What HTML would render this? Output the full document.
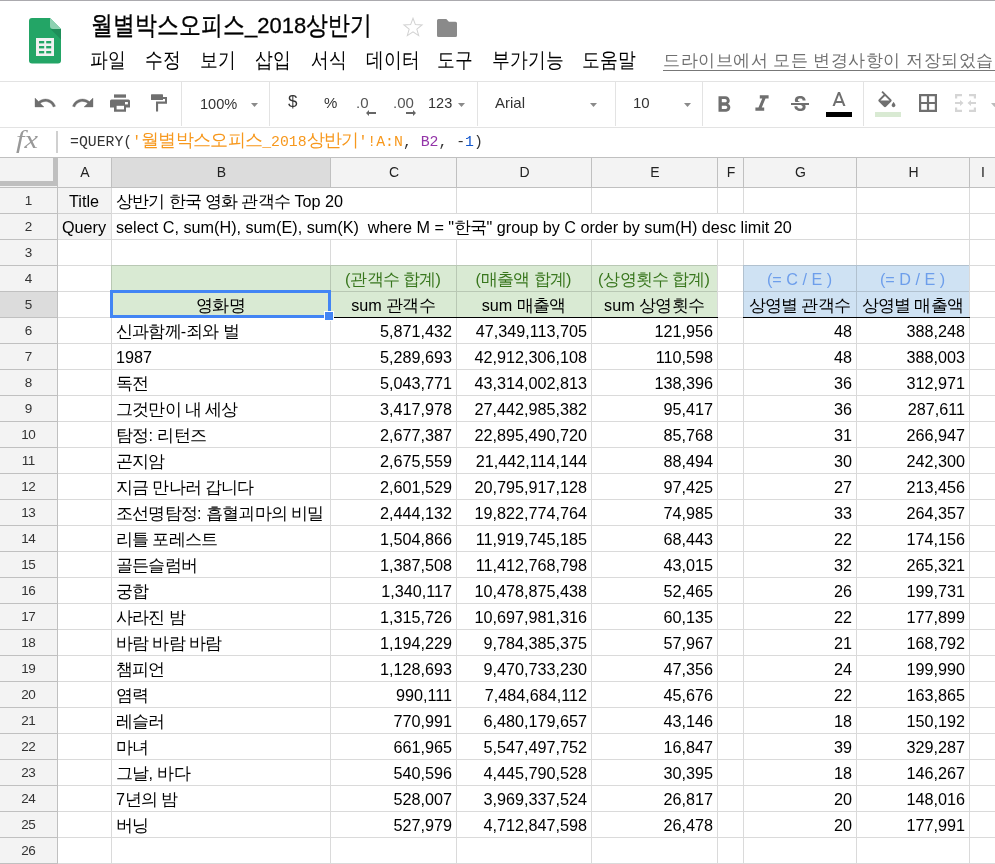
<!DOCTYPE html>
<html><head><meta charset="utf-8"><style>
*{box-sizing:border-box}
html,body{margin:0;padding:0;width:995px;height:864px;overflow:hidden;background:#fff;position:relative;font-family:"Liberation Sans",sans-serif}
.a{position:absolute}
.hl{position:absolute;height:1px}
.vl{position:absolute;width:1px}
.t{position:absolute;white-space:nowrap;font-size:16.2px;line-height:26px;height:26px;color:#000}
.r{text-align:right}
.k{font-size:17.3px;letter-spacing:-0.8px;position:relative;top:-0.5px}
.kf{font-size:18px;letter-spacing:-0.7px}
.c{text-align:center}
.mi{position:absolute;top:47px;font-size:17.5px;line-height:26px;color:#000;white-space:nowrap;transform:scaleY(1.18)}
.ky{display:inline-block;transform:scaleY(1.19)}
svg{position:absolute;overflow:visible}
</style></head><body>

<div class="hl" style="left:0;top:0;width:995px;background:#abaaae"></div>
<svg style="left:29px;top:18px" width="32" height="46" viewBox="0 0 32 46">
<path d="M3 0H21L32 11V42.5A3 3 0 0 1 29 45.5H3A3 3 0 0 1 0 42.5V3A3 3 0 0 1 3 0Z" fill="#23a566"/>
<path d="M21 0L32 11H24A3 3 0 0 1 21 8Z" fill="#8ed1b1"/>
<path d="M21.5 11L32 21.5V11Z" fill="#1e8e59"/>
<rect x="7" y="20" width="18" height="18" fill="#f1f1f1"/>
<rect x="10" y="23" width="5.2" height="2.4" fill="#23a566"/><rect x="17.2" y="23" width="5" height="2.4" fill="#23a566"/>
<rect x="10" y="28" width="5.2" height="2.4" fill="#23a566"/><rect x="17.2" y="28" width="5" height="2.4" fill="#23a566"/>
<rect x="10" y="33" width="5.2" height="2.4" fill="#23a566"/><rect x="17.2" y="33" width="5" height="2.4" fill="#23a566"/>
</svg>
<div class="a" style="left:91px;top:11px;font-size:22px;line-height:30px;color:#000;white-space:nowrap;-webkit-text-stroke:0.3px #000"><span class="ky">월별박스오피스</span>_2018<span class="ky">상반기</span></div>
<svg style="left:402px;top:16px" width="22" height="22" viewBox="0 0 24 24"><path d="M12 2.5l2.6 6.9 7.3.3-5.7 4.6 2 7.1L12 17.3l-6.2 4.1 2-7.1-5.7-4.6 7.3-.3z" fill="none" stroke="#d2d2d2" stroke-width="1.1"/></svg>
<svg style="left:437px;top:19px" width="20" height="18" viewBox="0 0 20 18"><path d="M0 1.5A1.5 1.5 0 0 1 1.5 0H9.3L11.9 2.7H18.5A1.5 1.5 0 0 1 20 4.2V16.5A1.5 1.5 0 0 1 18.5 18H1.5A1.5 1.5 0 0 1 0 16.5Z" fill="#8a8a8a"/></svg>
<div class="mi" style="left:90px">파일</div>
<div class="mi" style="left:145px">수정</div>
<div class="mi" style="left:200px">보기</div>
<div class="mi" style="left:255px">삽입</div>
<div class="mi" style="left:311px">서식</div>
<div class="mi" style="left:366px">데이터</div>
<div class="mi" style="left:437px">도구</div>
<div class="mi" style="left:492px">부가기능</div>
<div class="mi" style="left:582px">도움말</div>
<div class="a" style="left:663px;top:48px;font-size:17px;letter-spacing:0.5px;line-height:26px;color:#707070;white-space:nowrap">드라이브에서 모든 변경사항이 저장되었습니다</div>
<div class="hl" style="left:663px;top:70px;width:332px;background:#777"></div>
<div class="hl" style="left:0;top:81px;width:995px;background:#e3e3e3"></div>
<div class="hl" style="left:0;top:127px;width:995px;background:#e3e3e3"></div>
<div class="vl" style="left:181px;top:82px;height:44px;background:#e3e3e3"></div>
<div class="vl" style="left:269px;top:82px;height:44px;background:#e3e3e3"></div>
<div class="vl" style="left:477px;top:82px;height:44px;background:#e3e3e3"></div>
<div class="vl" style="left:615px;top:82px;height:44px;background:#e3e3e3"></div>
<div class="vl" style="left:702px;top:82px;height:44px;background:#e3e3e3"></div>
<div class="vl" style="left:863px;top:82px;height:44px;background:#e3e3e3"></div>
<svg style="left:32.8px;top:91.3px" width="24" height="24" viewBox="0 0 24 24"><path fill="#6f6f6f" stroke="#6f6f6f" stroke-width="0.35" d="M12.5 8c-2.65 0-5.05.99-6.9 2.6L2 7v9h9l-3.62-3.62c1.39-1.16 3.16-1.88 5.12-1.88 3.54 0 6.55 2.31 7.6 5.5l2.37-.78C21.08 11.03 17.15 8 12.5 8z"/></svg>
<svg style="left:70.6px;top:91.3px" width="24" height="24" viewBox="0 0 24 24"><path fill="#6f6f6f" stroke="#6f6f6f" stroke-width="0.35" d="M18.4 10.6C16.55 8.99 14.15 8 11.5 8c-4.65 0-8.58 3.03-9.96 7.22L3.9 16c1.05-3.19 4.05-5.5 7.6-5.5 1.95 0 3.73.72 5.12 1.88L13 16h9V7l-3.6 3.6z"/></svg>
<svg style="left:110px;top:94px" width="20" height="18" viewBox="0 0 20 18">
<rect x="4" y="0.4" width="12" height="3.3" fill="#6f6f6f"/>
<path d="M1.5 5.5H18.5A1.5 1.5 0 0 1 20 7V13.6H16V17.8H4V13.6H0V7A1.5 1.5 0 0 1 1.5 5.5Z" fill="#6f6f6f"/>
<rect x="6.6" y="11.8" width="7.4" height="3.6" fill="#fff"/>
<rect x="15" y="8" width="2.9" height="2.4" fill="#fff"/></svg>
<svg style="left:151px;top:94px" width="17" height="18" viewBox="0 0 17 18">
<rect x="0" y="0.2" width="12" height="5.8" rx="0.6" fill="#6f6f6f"/>
<path d="M12 3H16V9.7H7.1V17.5H5V7.5H14V5H12Z" fill="#6f6f6f"/></svg>
<div class="a" style="left:200px;top:94.5px;font-size:14.6px;line-height:18px;color:#333">100%</div>
<svg style="left:251px;top:103px" width="7" height="4" viewBox="0 0 7 4"><path d="M0 0H7L3.5 4Z" fill="#8a8a8a"/></svg>
<div class="a" style="left:288px;top:92px;font-size:17px;line-height:20px;color:#333">$</div>
<div class="a" style="left:324px;top:94px;font-size:15px;line-height:18px;color:#333">%</div>
<div class="a" style="left:356px;top:94px;font-size:15px;line-height:18px;color:#555">.0</div>
<svg style="left:366px;top:110px" width="10" height="6" viewBox="0 0 10 6"><path d="M3 0L0 3L3 6V3.9H10V2.1H3Z" fill="#666"/></svg>
<div class="a" style="left:393px;top:94px;font-size:15px;line-height:18px;color:#555">.00</div>
<svg style="left:406px;top:110px" width="10" height="6" viewBox="0 0 10 6"><path d="M7 0L10 3L7 6V3.9H0V2.1H7Z" fill="#666"/></svg>
<div class="a" style="left:428px;top:94px;font-size:14.5px;line-height:18px;color:#333">123</div>
<svg style="left:458px;top:103px" width="7" height="4" viewBox="0 0 7 4"><path d="M0 0H7L3.5 4Z" fill="#8a8a8a"/></svg>
<div class="a" style="left:495px;top:94px;font-size:15px;line-height:18px;color:#333">Arial</div>
<svg style="left:590px;top:102.5px" width="7" height="4" viewBox="0 0 7 4"><path d="M0 0H7L3.5 4Z" fill="#8a8a8a"/></svg>
<div class="a" style="left:633px;top:94px;font-size:15px;line-height:18px;color:#333">10</div>
<svg style="left:684px;top:102.5px" width="7" height="4" viewBox="0 0 7 4"><path d="M0 0H7L3.5 4Z" fill="#8a8a8a"/></svg>
<svg style="left:712.2px;top:92.5px" width="24" height="24" viewBox="0 0 24 24"><path transform="translate(12 11) scale(1.1) translate(-12 -11)" fill="#6f6f6f" d="M15.6 10.79c.97-.67 1.65-1.77 1.65-2.79 0-2.26-1.75-4-4-4H7v14h7.04c2.09 0 3.71-1.7 3.71-3.79 0-1.52-.86-2.82-2.15-3.42zM10 6.5h3c.83 0 1.5.67 1.5 1.5s-.67 1.5-1.5 1.5h-3v-3zm3.5 9H10v-3h3.5c.83 0 1.5.67 1.5 1.5s-.67 1.5-1.5 1.5z"/></svg>
<svg style="left:750px;top:92px" width="24" height="24" viewBox="0 0 24 24"><path transform="translate(12 11) scale(1.1) translate(-12 -11)" fill="#6f6f6f" d="M10 4v3h2.21l-3.42 8H6v3h8v-3h-2.21l3.42-8H18V4z"/></svg>
<svg style="left:788px;top:92.5px" width="24" height="24" viewBox="0 0 24 24"><path fill="#6f6f6f" d="M7.24 8.75c-.26-.48-.39-1.03-.39-1.67 0-.61.13-1.16.4-1.67.26-.5.63-.93 1.11-1.29.48-.35 1.050-.63 1.7-.83.66-.19 1.39-.29 2.18-.29.81 0 1.54.11 2.21.34.66.22 1.23.54 1.69.94.47.4.83.88 1.08 1.43.25.55.38 1.15.38 1.81h-3.01c0-.31-.05-.59-.15-.85-.09-.27-.24-.49-.44-.68-.2-.19-.45-.33-.75-.44-.3-.1-.66-.16-1.06-.16-.39 0-.74.04-1.03.13-.29.09-.53.21-.72.36-.19.16-.34.34-.44.55-.1.21-.15.43-.15.66 0 .48.25.88.74 1.21.38.25.77.48 1.41.7H7.39c-.05-.08-.11-.17-.15-.25zM21 12v-2H3v2h9.62c.18.07.4.14.55.2.37.17.66.34.87.51.21.17.35.36.43.57.07.2.11.43.11.69 0 .23-.05.45-.14.66-.09.2-.23.38-.42.53-.19.15-.42.26-.71.35-.29.08-.63.13-1.010.13-.43 0-.83-.04-1.18-.13s-.66-.23-.91-.42c-.25-.19-.45-.44-.59-.75-.14-.31-.25-.76-.25-1.21H6.4c0 .55.08 1.13.24 1.58.16.45.37.85.65 1.210.28.35.6.66.98.92.37.26.78.48 1.22.65.44.17.9.3 1.38.39.48.08.96.13 1.44.13.8 0 1.53-.09 2.18-.28s1.21-.45 1.670-.79c.46-.34.82-.77 1.07-1.27s.38-1.07.38-1.71c0-.6-.1-1.14-.31-1.61-.05-.11-.11-.23-.17-.33H21z"/></svg>
<svg style="left:826.5px;top:89.2px" width="24" height="24" viewBox="0 0 24 24"><path fill="#6f6f6f" d="M11 3L5.5 17h2.25l1.12-3h6.25l1.12 3h2.25L13 3h-2zm-1.38 9L12 5.67 14.38 12H9.62z"/></svg>
<div class="a" style="left:826px;top:112px;width:26px;height:5px;background:#000"></div>
<svg style="left:875px;top:90px" width="26" height="27" viewBox="0 0 26 27"><g transform="translate(0.5 1) scale(0.95)"><path fill="#6f6f6f" d="M16.56 8.94L7.62 0 6.21 1.41l2.38 2.38-5.15 5.15c-.59.59-.59 1.54 0 2.12l5.5 5.5c.29.29.68.44 1.06.44s.77-.15 1.06-.44l5.5-5.5c.59-.58.59-1.53 0-2.12zM5.21 10L10 5.21 14.79 10H5.21zM19 11.5s-2 2.17-2 3.5c0 1.1.9 2 2 2s2-.9 2-2c0-1.33-2-3.5-2-3.5z"/></g><rect x="0" y="22" width="26" height="5" fill="#d9ead3"/></svg>
<svg style="left:919px;top:94px" width="18" height="18" viewBox="0 0 18 18"><path fill="#6f6f6f" d="M0 0V18H18V0ZM2.2 2.2H7.9V7.9H2.2ZM10.1 2.2H15.8V7.9H10.1ZM2.2 10.1H7.9V15.8H2.2ZM10.1 10.1H15.8V15.8H10.1Z"/></svg>
<svg style="left:955px;top:94px" width="21" height="18" viewBox="0 0 21 18"><g fill="#d5d5d5">
<path d="M0 0H7V2.2H2.2V4.5H0Z"/><path d="M21 0H14V2.2H18.8V4.5H21Z"/>
<path d="M0 18H7V15.8H2.2V13.5H0Z"/><path d="M21 18H14V15.8H18.8V13.5H21Z"/>
<path d="M0 8H5V6L8.5 9L5 12V10H0Z"/><path d="M21 8H16V6L12.5 9L16 12V10H21Z"/>
</g></svg>
<svg style="left:991px;top:103px" width="7" height="4" viewBox="0 0 7 4"><path d="M0 0H7L3.5 4Z" fill="#bbb"/></svg>
<div class="a" style="left:16px;top:125px;font-family:'Liberation Serif',serif;font-style:italic;font-size:25px;line-height:30px;color:#999;transform:scaleX(1.22);transform-origin:0 0">fx</div>
<div class="a" style="left:56px;top:131px;width:2px;height:22px;background:#d0d0d0"></div>
<div class="a" style="left:70px;top:128px;font-family:'Liberation Mono',monospace;font-size:14.8px;line-height:26px;color:#333;white-space:nowrap">=QUERY(<span style="color:#f7981d">'<span class="kf">월별박스오피스</span>_2018<span class="kf">상반기</span>'!A:N</span>, <span style="color:#9334a8">B2</span>, -<span style="color:#1155cc">1</span>)</div>
<div class="a" style="left:0;top:157px;width:995px;height:30px;background:#f3f3f3"></div>
<div class="a" style="left:0;top:187px;width:57px;height:677px;background:#f3f3f3"></div>
<div class="a" style="left:111px;top:158px;width:219px;height:29px;background:#dcdcdc"></div>
<div class="a" style="left:0;top:291px;width:57px;height:26px;background:#dcdcdc"></div>
<div class="a" style="left:57px;top:187px;width:54px;height:52px;background:#f3f3f3"></div>
<div class="a" style="left:111px;top:265px;width:606px;height:52px;background:#d9ead3"></div>
<div class="a" style="left:743px;top:265px;width:226px;height:52px;background:#cfe2f3"></div>
<svg style="left:57px;top:187px;mix-blend-mode:multiply" width="938" height="677" viewBox="0 0 938 677" shape-rendering="crispEdges"><path fill="#dadada" d="M0 0H938V1H0ZM0 26H938V27H0ZM0 52H938V53H0ZM0 78H938V79H0ZM0 104H938V105H0ZM0 130H938V131H0ZM0 156H938V157H0ZM0 182H938V183H0ZM0 208H938V209H0ZM0 234H938V235H0ZM0 260H938V261H0ZM0 286H938V287H0ZM0 312H938V313H0ZM0 338H938V339H0ZM0 364H938V365H0ZM0 390H938V391H0ZM0 416H938V417H0ZM0 442H938V443H0ZM0 468H938V469H0ZM0 494H938V495H0ZM0 520H938V521H0ZM0 546H938V547H0ZM0 572H938V573H0ZM0 598H938V599H0ZM0 624H938V625H0ZM0 650H938V651H0ZM0 676H938V677H0ZM54 0H55V27H54ZM54 26H55V53H54ZM54 52H55V79H54ZM54 78H55V105H54ZM54 104H55V131H54ZM54 130H55V157H54ZM54 156H55V183H54ZM54 182H55V209H54ZM54 208H55V235H54ZM54 234H55V261H54ZM54 260H55V287H54ZM54 286H55V313H54ZM54 312H55V339H54ZM54 338H55V365H54ZM54 364H55V391H54ZM54 390H55V417H54ZM54 416H55V443H54ZM54 442H55V469H54ZM54 468H55V495H54ZM54 494H55V521H54ZM54 520H55V547H54ZM54 546H55V573H54ZM54 572H55V599H54ZM54 598H55V625H54ZM54 624H55V651H54ZM54 650H55V677H54ZM273 52H274V79H273ZM273 78H274V105H273ZM273 104H274V131H273ZM273 130H274V157H273ZM273 156H274V183H273ZM273 182H274V209H273ZM273 208H274V235H273ZM273 234H274V261H273ZM273 260H274V287H273ZM273 286H274V313H273ZM273 312H274V339H273ZM273 338H274V365H273ZM273 364H274V391H273ZM273 390H274V417H273ZM273 416H274V443H273ZM273 442H274V469H273ZM273 468H274V495H273ZM273 494H274V521H273ZM273 520H274V547H273ZM273 546H274V573H273ZM273 572H274V599H273ZM273 598H274V625H273ZM273 624H274V651H273ZM273 650H274V677H273ZM399 0H400V27H399ZM399 52H400V79H399ZM399 78H400V105H399ZM399 104H400V131H399ZM399 130H400V157H399ZM399 156H400V183H399ZM399 182H400V209H399ZM399 208H400V235H399ZM399 234H400V261H399ZM399 260H400V287H399ZM399 286H400V313H399ZM399 312H400V339H399ZM399 338H400V365H399ZM399 364H400V391H399ZM399 390H400V417H399ZM399 416H400V443H399ZM399 442H400V469H399ZM399 468H400V495H399ZM399 494H400V521H399ZM399 520H400V547H399ZM399 546H400V573H399ZM399 572H400V599H399ZM399 598H400V625H399ZM399 624H400V651H399ZM399 650H400V677H399ZM534 0H535V27H534ZM534 52H535V79H534ZM534 78H535V105H534ZM534 104H535V131H534ZM534 130H535V157H534ZM534 156H535V183H534ZM534 182H535V209H534ZM534 208H535V235H534ZM534 234H535V261H534ZM534 260H535V287H534ZM534 286H535V313H534ZM534 312H535V339H534ZM534 338H535V365H534ZM534 364H535V391H534ZM534 390H535V417H534ZM534 416H535V443H534ZM534 442H535V469H534ZM534 468H535V495H534ZM534 494H535V521H534ZM534 520H535V547H534ZM534 546H535V573H534ZM534 572H535V599H534ZM534 598H535V625H534ZM534 624H535V651H534ZM534 650H535V677H534ZM660 0H661V27H660ZM660 52H661V79H660ZM660 78H661V105H660ZM660 104H661V131H660ZM660 130H661V157H660ZM660 156H661V183H660ZM660 182H661V209H660ZM660 208H661V235H660ZM660 234H661V261H660ZM660 260H661V287H660ZM660 286H661V313H660ZM660 312H661V339H660ZM660 338H661V365H660ZM660 364H661V391H660ZM660 390H661V417H660ZM660 416H661V443H660ZM660 442H661V469H660ZM660 468H661V495H660ZM660 494H661V521H660ZM660 520H661V547H660ZM660 546H661V573H660ZM660 572H661V599H660ZM660 598H661V625H660ZM660 624H661V651H660ZM660 650H661V677H660ZM686 0H687V27H686ZM686 52H687V79H686ZM686 78H687V105H686ZM686 104H687V131H686ZM686 130H687V157H686ZM686 156H687V183H686ZM686 182H687V209H686ZM686 208H687V235H686ZM686 234H687V261H686ZM686 260H687V287H686ZM686 286H687V313H686ZM686 312H687V339H686ZM686 338H687V365H686ZM686 364H687V391H686ZM686 390H687V417H686ZM686 416H687V443H686ZM686 442H687V469H686ZM686 468H687V495H686ZM686 494H687V521H686ZM686 520H687V547H686ZM686 546H687V573H686ZM686 572H687V599H686ZM686 598H687V625H686ZM686 624H687V651H686ZM686 650H687V677H686ZM799 0H800V27H799ZM799 26H800V53H799ZM799 52H800V79H799ZM799 78H800V105H799ZM799 104H800V131H799ZM799 130H800V157H799ZM799 156H800V183H799ZM799 182H800V209H799ZM799 208H800V235H799ZM799 234H800V261H799ZM799 260H800V287H799ZM799 286H800V313H799ZM799 312H800V339H799ZM799 338H800V365H799ZM799 364H800V391H799ZM799 390H800V417H799ZM799 416H800V443H799ZM799 442H800V469H799ZM799 468H800V495H799ZM799 494H800V521H799ZM799 520H800V547H799ZM799 546H800V573H799ZM799 572H800V599H799ZM799 598H800V625H799ZM799 624H800V651H799ZM799 650H800V677H799ZM912 0H913V27H912ZM912 26H913V53H912ZM912 52H913V79H912ZM912 78H913V105H912ZM912 104H913V131H912ZM912 130H913V157H912ZM912 156H913V183H912ZM912 182H913V209H912ZM912 208H913V235H912ZM912 234H913V261H912ZM912 260H913V287H912ZM912 286H913V313H912ZM912 312H913V339H912ZM912 338H913V365H912ZM912 364H913V391H912ZM912 390H913V417H912ZM912 416H913V443H912ZM912 442H913V469H912ZM912 468H913V495H912ZM912 494H913V521H912ZM912 520H913V547H912ZM912 546H913V573H912ZM912 572H913V599H912ZM912 598H913V625H912ZM912 624H913V651H912ZM912 650H913V677H912Z"/></svg>
<div class="hl" style="left:0;top:157px;width:995px;background:#c0c0c0"></div>
<div class="hl" style="left:57px;top:187px;width:938px;background:#c0c0c0"></div>
<div class="vl" style="left:111px;top:158px;height:29px;background:#c0c0c0"></div>
<div class="vl" style="left:330px;top:158px;height:29px;background:#c0c0c0"></div>
<div class="vl" style="left:456px;top:158px;height:29px;background:#c0c0c0"></div>
<div class="vl" style="left:591px;top:158px;height:29px;background:#c0c0c0"></div>
<div class="vl" style="left:717px;top:158px;height:29px;background:#c0c0c0"></div>
<div class="vl" style="left:743px;top:158px;height:29px;background:#c0c0c0"></div>
<div class="vl" style="left:856px;top:158px;height:29px;background:#c0c0c0"></div>
<div class="vl" style="left:969px;top:158px;height:29px;background:#c0c0c0"></div>
<div class="hl" style="left:0;top:187px;width:57px;background:#c0c0c0"></div>
<div class="hl" style="left:0;top:213px;width:57px;background:#c0c0c0"></div>
<div class="hl" style="left:0;top:239px;width:57px;background:#c0c0c0"></div>
<div class="hl" style="left:0;top:265px;width:57px;background:#c0c0c0"></div>
<div class="hl" style="left:0;top:291px;width:57px;background:#c0c0c0"></div>
<div class="hl" style="left:0;top:317px;width:57px;background:#c0c0c0"></div>
<div class="hl" style="left:0;top:343px;width:57px;background:#c0c0c0"></div>
<div class="hl" style="left:0;top:369px;width:57px;background:#c0c0c0"></div>
<div class="hl" style="left:0;top:395px;width:57px;background:#c0c0c0"></div>
<div class="hl" style="left:0;top:421px;width:57px;background:#c0c0c0"></div>
<div class="hl" style="left:0;top:447px;width:57px;background:#c0c0c0"></div>
<div class="hl" style="left:0;top:473px;width:57px;background:#c0c0c0"></div>
<div class="hl" style="left:0;top:499px;width:57px;background:#c0c0c0"></div>
<div class="hl" style="left:0;top:525px;width:57px;background:#c0c0c0"></div>
<div class="hl" style="left:0;top:551px;width:57px;background:#c0c0c0"></div>
<div class="hl" style="left:0;top:577px;width:57px;background:#c0c0c0"></div>
<div class="hl" style="left:0;top:603px;width:57px;background:#c0c0c0"></div>
<div class="hl" style="left:0;top:629px;width:57px;background:#c0c0c0"></div>
<div class="hl" style="left:0;top:655px;width:57px;background:#c0c0c0"></div>
<div class="hl" style="left:0;top:681px;width:57px;background:#c0c0c0"></div>
<div class="hl" style="left:0;top:707px;width:57px;background:#c0c0c0"></div>
<div class="hl" style="left:0;top:733px;width:57px;background:#c0c0c0"></div>
<div class="hl" style="left:0;top:759px;width:57px;background:#c0c0c0"></div>
<div class="hl" style="left:0;top:785px;width:57px;background:#c0c0c0"></div>
<div class="hl" style="left:0;top:811px;width:57px;background:#c0c0c0"></div>
<div class="hl" style="left:0;top:837px;width:57px;background:#c0c0c0"></div>
<div class="hl" style="left:0;top:863px;width:57px;background:#c0c0c0"></div>
<div class="vl" style="left:57px;top:158px;height:706px;background:#c0c0c0"></div>
<div class="a" style="left:53px;top:158px;width:5px;height:28px;background:#bfbfbf"></div>
<div class="a" style="left:0;top:181px;width:58px;height:5px;background:#bfbfbf"></div>
<div class="t c" style="left:58px;top:159px;width:54px;font-size:14px;color:#222">A</div>
<div class="t c" style="left:112px;top:159px;width:219px;font-size:14px;color:#222">B</div>
<div class="t c" style="left:331px;top:159px;width:126px;font-size:14px;color:#222">C</div>
<div class="t c" style="left:457px;top:159px;width:135px;font-size:14px;color:#222">D</div>
<div class="t c" style="left:592px;top:159px;width:126px;font-size:14px;color:#222">E</div>
<div class="t c" style="left:718px;top:159px;width:26px;font-size:14px;color:#222">F</div>
<div class="t c" style="left:744px;top:159px;width:113px;font-size:14px;color:#222">G</div>
<div class="t c" style="left:857px;top:159px;width:113px;font-size:14px;color:#222">H</div>
<div class="t c" style="left:970px;top:159px;width:26px;font-size:14px;color:#222">I</div>
<div class="t c" style="left:-0.5px;top:188px;width:57px;font-size:13.5px;letter-spacing:-0.5px;text-indent:0.5px;color:#333">1</div>
<div class="t c" style="left:-0.5px;top:214px;width:57px;font-size:13.5px;letter-spacing:-0.5px;text-indent:0.5px;color:#333">2</div>
<div class="t c" style="left:-0.5px;top:240px;width:57px;font-size:13.5px;letter-spacing:-0.5px;text-indent:0.5px;color:#333">3</div>
<div class="t c" style="left:-0.5px;top:266px;width:57px;font-size:13.5px;letter-spacing:-0.5px;text-indent:0.5px;color:#333">4</div>
<div class="t c" style="left:-0.5px;top:292px;width:57px;font-size:13.5px;letter-spacing:-0.5px;text-indent:0.5px;color:#333">5</div>
<div class="t c" style="left:-0.5px;top:318px;width:57px;font-size:13.5px;letter-spacing:-0.5px;text-indent:0.5px;color:#333">6</div>
<div class="t c" style="left:-0.5px;top:344px;width:57px;font-size:13.5px;letter-spacing:-0.5px;text-indent:0.5px;color:#333">7</div>
<div class="t c" style="left:-0.5px;top:370px;width:57px;font-size:13.5px;letter-spacing:-0.5px;text-indent:0.5px;color:#333">8</div>
<div class="t c" style="left:-0.5px;top:396px;width:57px;font-size:13.5px;letter-spacing:-0.5px;text-indent:0.5px;color:#333">9</div>
<div class="t c" style="left:-0.5px;top:422px;width:57px;font-size:13.5px;letter-spacing:-0.5px;text-indent:0.5px;color:#333">10</div>
<div class="t c" style="left:-0.5px;top:448px;width:57px;font-size:13.5px;letter-spacing:-0.5px;text-indent:0.5px;color:#333">11</div>
<div class="t c" style="left:-0.5px;top:474px;width:57px;font-size:13.5px;letter-spacing:-0.5px;text-indent:0.5px;color:#333">12</div>
<div class="t c" style="left:-0.5px;top:500px;width:57px;font-size:13.5px;letter-spacing:-0.5px;text-indent:0.5px;color:#333">13</div>
<div class="t c" style="left:-0.5px;top:526px;width:57px;font-size:13.5px;letter-spacing:-0.5px;text-indent:0.5px;color:#333">14</div>
<div class="t c" style="left:-0.5px;top:552px;width:57px;font-size:13.5px;letter-spacing:-0.5px;text-indent:0.5px;color:#333">15</div>
<div class="t c" style="left:-0.5px;top:578px;width:57px;font-size:13.5px;letter-spacing:-0.5px;text-indent:0.5px;color:#333">16</div>
<div class="t c" style="left:-0.5px;top:604px;width:57px;font-size:13.5px;letter-spacing:-0.5px;text-indent:0.5px;color:#333">17</div>
<div class="t c" style="left:-0.5px;top:630px;width:57px;font-size:13.5px;letter-spacing:-0.5px;text-indent:0.5px;color:#333">18</div>
<div class="t c" style="left:-0.5px;top:656px;width:57px;font-size:13.5px;letter-spacing:-0.5px;text-indent:0.5px;color:#333">19</div>
<div class="t c" style="left:-0.5px;top:682px;width:57px;font-size:13.5px;letter-spacing:-0.5px;text-indent:0.5px;color:#333">20</div>
<div class="t c" style="left:-0.5px;top:708px;width:57px;font-size:13.5px;letter-spacing:-0.5px;text-indent:0.5px;color:#333">21</div>
<div class="t c" style="left:-0.5px;top:734px;width:57px;font-size:13.5px;letter-spacing:-0.5px;text-indent:0.5px;color:#333">22</div>
<div class="t c" style="left:-0.5px;top:760px;width:57px;font-size:13.5px;letter-spacing:-0.5px;text-indent:0.5px;color:#333">23</div>
<div class="t c" style="left:-0.5px;top:786px;width:57px;font-size:13.5px;letter-spacing:-0.5px;text-indent:0.5px;color:#333">24</div>
<div class="t c" style="left:-0.5px;top:812px;width:57px;font-size:13.5px;letter-spacing:-0.5px;text-indent:0.5px;color:#333">25</div>
<div class="t c" style="left:-0.5px;top:838px;width:57px;font-size:13.5px;letter-spacing:-0.5px;text-indent:0.5px;color:#333">26</div>
<div class="t c" style="left:57px;top:188px;width:54px;">Title</div>
<div class="t c" style="left:57px;top:214px;width:54px;">Query</div>
<div class="t" style="left:116px;top:188px;"><span class="k">상반기 한국 영화 관객수</span> Top 20</div>
<div class="t" style="left:116px;top:214px;">select C, sum(H), sum(E), sum(K)&nbsp; where M = "<span class="k">한국</span>" group by C order by sum(H) desc limit 20</div>
<div class="t c" style="left:330px;top:266px;width:126px;color:#38761d">(<span class="k">관객수 합계</span>)</div>
<div class="t c" style="left:456px;top:266px;width:135px;color:#38761d">(<span class="k">매출액 합계</span>)</div>
<div class="t c" style="left:591px;top:266px;width:126px;color:#38761d">(<span class="k">상영횟수 합계</span>)</div>
<div class="t c" style="left:743px;top:266px;width:113px;color:#6d9eeb">(= C / E )</div>
<div class="t c" style="left:856px;top:266px;width:113px;color:#6d9eeb">(= D / E )</div>
<div class="t c" style="left:111px;top:292px;width:219px;"><span class="k">영화명</span></div>
<div class="t c" style="left:330px;top:292px;width:126px;">sum <span class="k">관객수</span></div>
<div class="t c" style="left:456px;top:292px;width:135px;">sum <span class="k">매출액</span></div>
<div class="t c" style="left:591px;top:292px;width:126px;">sum <span class="k">상영횟수</span></div>
<div class="t c" style="left:743px;top:292px;width:113px;"><span class="k">상영별 관객수</span></div>
<div class="t c" style="left:856px;top:292px;width:113px;"><span class="k">상영별 매출액</span></div>
<div class="t" style="left:116px;top:318px;"><span class="k">신과함께</span>-<span class="k">죄와 벌</span></div>
<div class="t r" style="left:330px;top:318px;width:122px;">5,871,432</div>
<div class="t r" style="left:456px;top:318px;width:131px;">47,349,113,705</div>
<div class="t r" style="left:591px;top:318px;width:122px;">121,956</div>
<div class="t r" style="left:743px;top:318px;width:109px;">48</div>
<div class="t r" style="left:856px;top:318px;width:109px;">388,248</div>
<div class="t" style="left:116px;top:344px;">1987</div>
<div class="t r" style="left:330px;top:344px;width:122px;">5,289,693</div>
<div class="t r" style="left:456px;top:344px;width:131px;">42,912,306,108</div>
<div class="t r" style="left:591px;top:344px;width:122px;">110,598</div>
<div class="t r" style="left:743px;top:344px;width:109px;">48</div>
<div class="t r" style="left:856px;top:344px;width:109px;">388,003</div>
<div class="t" style="left:116px;top:370px;"><span class="k">독전</span></div>
<div class="t r" style="left:330px;top:370px;width:122px;">5,043,771</div>
<div class="t r" style="left:456px;top:370px;width:131px;">43,314,002,813</div>
<div class="t r" style="left:591px;top:370px;width:122px;">138,396</div>
<div class="t r" style="left:743px;top:370px;width:109px;">36</div>
<div class="t r" style="left:856px;top:370px;width:109px;">312,971</div>
<div class="t" style="left:116px;top:396px;"><span class="k">그것만이 내 세상</span></div>
<div class="t r" style="left:330px;top:396px;width:122px;">3,417,978</div>
<div class="t r" style="left:456px;top:396px;width:131px;">27,442,985,382</div>
<div class="t r" style="left:591px;top:396px;width:122px;">95,417</div>
<div class="t r" style="left:743px;top:396px;width:109px;">36</div>
<div class="t r" style="left:856px;top:396px;width:109px;">287,611</div>
<div class="t" style="left:116px;top:422px;"><span class="k">탐정</span>: <span class="k">리턴즈</span></div>
<div class="t r" style="left:330px;top:422px;width:122px;">2,677,387</div>
<div class="t r" style="left:456px;top:422px;width:131px;">22,895,490,720</div>
<div class="t r" style="left:591px;top:422px;width:122px;">85,768</div>
<div class="t r" style="left:743px;top:422px;width:109px;">31</div>
<div class="t r" style="left:856px;top:422px;width:109px;">266,947</div>
<div class="t" style="left:116px;top:448px;"><span class="k">곤지암</span></div>
<div class="t r" style="left:330px;top:448px;width:122px;">2,675,559</div>
<div class="t r" style="left:456px;top:448px;width:131px;">21,442,114,144</div>
<div class="t r" style="left:591px;top:448px;width:122px;">88,494</div>
<div class="t r" style="left:743px;top:448px;width:109px;">30</div>
<div class="t r" style="left:856px;top:448px;width:109px;">242,300</div>
<div class="t" style="left:116px;top:474px;"><span class="k">지금 만나러 갑니다</span></div>
<div class="t r" style="left:330px;top:474px;width:122px;">2,601,529</div>
<div class="t r" style="left:456px;top:474px;width:131px;">20,795,917,128</div>
<div class="t r" style="left:591px;top:474px;width:122px;">97,425</div>
<div class="t r" style="left:743px;top:474px;width:109px;">27</div>
<div class="t r" style="left:856px;top:474px;width:109px;">213,456</div>
<div class="t" style="left:116px;top:500px;"><span class="k">조선명탐정</span>: <span class="k">흡혈괴마의 비밀</span></div>
<div class="t r" style="left:330px;top:500px;width:122px;">2,444,132</div>
<div class="t r" style="left:456px;top:500px;width:131px;">19,822,774,764</div>
<div class="t r" style="left:591px;top:500px;width:122px;">74,985</div>
<div class="t r" style="left:743px;top:500px;width:109px;">33</div>
<div class="t r" style="left:856px;top:500px;width:109px;">264,357</div>
<div class="t" style="left:116px;top:526px;"><span class="k">리틀 포레스트</span></div>
<div class="t r" style="left:330px;top:526px;width:122px;">1,504,866</div>
<div class="t r" style="left:456px;top:526px;width:131px;">11,919,745,185</div>
<div class="t r" style="left:591px;top:526px;width:122px;">68,443</div>
<div class="t r" style="left:743px;top:526px;width:109px;">22</div>
<div class="t r" style="left:856px;top:526px;width:109px;">174,156</div>
<div class="t" style="left:116px;top:552px;"><span class="k">골든슬럼버</span></div>
<div class="t r" style="left:330px;top:552px;width:122px;">1,387,508</div>
<div class="t r" style="left:456px;top:552px;width:131px;">11,412,768,798</div>
<div class="t r" style="left:591px;top:552px;width:122px;">43,015</div>
<div class="t r" style="left:743px;top:552px;width:109px;">32</div>
<div class="t r" style="left:856px;top:552px;width:109px;">265,321</div>
<div class="t" style="left:116px;top:578px;"><span class="k">궁합</span></div>
<div class="t r" style="left:330px;top:578px;width:122px;">1,340,117</div>
<div class="t r" style="left:456px;top:578px;width:131px;">10,478,875,438</div>
<div class="t r" style="left:591px;top:578px;width:122px;">52,465</div>
<div class="t r" style="left:743px;top:578px;width:109px;">26</div>
<div class="t r" style="left:856px;top:578px;width:109px;">199,731</div>
<div class="t" style="left:116px;top:604px;"><span class="k">사라진 밤</span></div>
<div class="t r" style="left:330px;top:604px;width:122px;">1,315,726</div>
<div class="t r" style="left:456px;top:604px;width:131px;">10,697,981,316</div>
<div class="t r" style="left:591px;top:604px;width:122px;">60,135</div>
<div class="t r" style="left:743px;top:604px;width:109px;">22</div>
<div class="t r" style="left:856px;top:604px;width:109px;">177,899</div>
<div class="t" style="left:116px;top:630px;"><span class="k">바람 바람 바람</span></div>
<div class="t r" style="left:330px;top:630px;width:122px;">1,194,229</div>
<div class="t r" style="left:456px;top:630px;width:131px;">9,784,385,375</div>
<div class="t r" style="left:591px;top:630px;width:122px;">57,967</div>
<div class="t r" style="left:743px;top:630px;width:109px;">21</div>
<div class="t r" style="left:856px;top:630px;width:109px;">168,792</div>
<div class="t" style="left:116px;top:656px;"><span class="k">챔피언</span></div>
<div class="t r" style="left:330px;top:656px;width:122px;">1,128,693</div>
<div class="t r" style="left:456px;top:656px;width:131px;">9,470,733,230</div>
<div class="t r" style="left:591px;top:656px;width:122px;">47,356</div>
<div class="t r" style="left:743px;top:656px;width:109px;">24</div>
<div class="t r" style="left:856px;top:656px;width:109px;">199,990</div>
<div class="t" style="left:116px;top:682px;"><span class="k">염력</span></div>
<div class="t r" style="left:330px;top:682px;width:122px;">990,111</div>
<div class="t r" style="left:456px;top:682px;width:131px;">7,484,684,112</div>
<div class="t r" style="left:591px;top:682px;width:122px;">45,676</div>
<div class="t r" style="left:743px;top:682px;width:109px;">22</div>
<div class="t r" style="left:856px;top:682px;width:109px;">163,865</div>
<div class="t" style="left:116px;top:708px;"><span class="k">레슬러</span></div>
<div class="t r" style="left:330px;top:708px;width:122px;">770,991</div>
<div class="t r" style="left:456px;top:708px;width:131px;">6,480,179,657</div>
<div class="t r" style="left:591px;top:708px;width:122px;">43,146</div>
<div class="t r" style="left:743px;top:708px;width:109px;">18</div>
<div class="t r" style="left:856px;top:708px;width:109px;">150,192</div>
<div class="t" style="left:116px;top:734px;"><span class="k">마녀</span></div>
<div class="t r" style="left:330px;top:734px;width:122px;">661,965</div>
<div class="t r" style="left:456px;top:734px;width:131px;">5,547,497,752</div>
<div class="t r" style="left:591px;top:734px;width:122px;">16,847</div>
<div class="t r" style="left:743px;top:734px;width:109px;">39</div>
<div class="t r" style="left:856px;top:734px;width:109px;">329,287</div>
<div class="t" style="left:116px;top:760px;"><span class="k">그날</span>, <span class="k">바다</span></div>
<div class="t r" style="left:330px;top:760px;width:122px;">540,596</div>
<div class="t r" style="left:456px;top:760px;width:131px;">4,445,790,528</div>
<div class="t r" style="left:591px;top:760px;width:122px;">30,395</div>
<div class="t r" style="left:743px;top:760px;width:109px;">18</div>
<div class="t r" style="left:856px;top:760px;width:109px;">146,267</div>
<div class="t" style="left:116px;top:786px;">7<span class="k">년의 밤</span></div>
<div class="t r" style="left:330px;top:786px;width:122px;">528,007</div>
<div class="t r" style="left:456px;top:786px;width:131px;">3,969,337,524</div>
<div class="t r" style="left:591px;top:786px;width:122px;">26,817</div>
<div class="t r" style="left:743px;top:786px;width:109px;">20</div>
<div class="t r" style="left:856px;top:786px;width:109px;">148,016</div>
<div class="t" style="left:116px;top:812px;"><span class="k">버닝</span></div>
<div class="t r" style="left:330px;top:812px;width:122px;">527,979</div>
<div class="t r" style="left:456px;top:812px;width:131px;">4,712,847,598</div>
<div class="t r" style="left:591px;top:812px;width:122px;">26,478</div>
<div class="t r" style="left:743px;top:812px;width:109px;">20</div>
<div class="t r" style="left:856px;top:812px;width:109px;">177,991</div>
<div class="hl" style="left:111px;top:317px;width:607px;background:#000"></div>
<div class="hl" style="left:743px;top:317px;width:227px;background:#000"></div>
<div class="a" style="left:110px;top:290px;width:221px;height:28px;border:3px solid #4285f4"></div>
<div class="a" style="left:324px;top:311px;width:10px;height:10px;background:#4285f4;border:1px solid #fff"></div>
</body></html>
